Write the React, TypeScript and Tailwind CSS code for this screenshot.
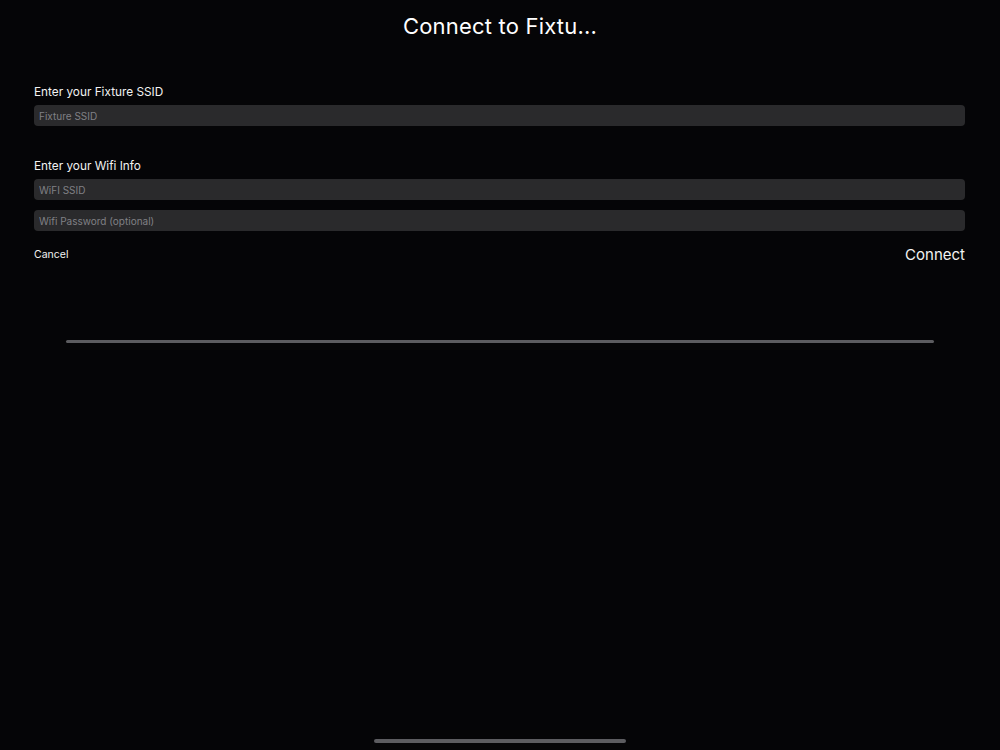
export default function App() {
  const font = { fontFamily: '"Inter", "Liberation Sans", sans-serif' };
  return (
    <div className="w-[1000px] h-[750px] bg-[#050507] text-white flex flex-col relative overflow-hidden" style={font}>
      <div className="h-[52px] flex items-center justify-center">
        <h1 className="text-[22px] font-normal tracking-[0.2px]">Connect to Fixtu...</h1>
      </div>
      <div className="px-[34px] pt-[31px] flex flex-col">
        <label className="text-[11.8px] text-[#f2f2f2] leading-[18px]">Enter your Fixture SSID</label>
        <input
          placeholder="Fixture SSID"
          className="mt-[4px] h-[21px] w-[931px] rounded-[4px] bg-[#2a2a2c] px-[5px] text-[10px] text-white placeholder-[#808085] outline-none"
        />
        <label className="mt-[31px] text-[11.8px] text-[#f2f2f2] leading-[18px]">Enter your Wifi Info</label>
        <input
          placeholder="WiFI SSID"
          className="mt-[4px] h-[21px] w-[931px] rounded-[4px] bg-[#2a2a2c] px-[5px] text-[10px] text-white placeholder-[#808085] outline-none"
        />
        <input
          placeholder="Wifi Password (optional)"
          className="mt-[10px] h-[21px] w-[931px] rounded-[4px] bg-[#2a2a2c] px-[5px] text-[10px] text-white placeholder-[#808085] outline-none"
        />
        <div className="mt-[13px] w-[931px] flex items-center justify-between">
          <button className="text-[10.5px] text-[#f2f2f2]">Cancel</button>
          <button className="text-[15px] text-[#f2f2f2]">Connect</button>
        </div>
      </div>
      <div className="mt-[73px] mx-[66px] h-[3px] bg-[#5c5c60] rounded-full" />
      <div className="absolute bottom-[7px] left-[374px] w-[252px] h-[4px] rounded-full bg-[#5c5c60]" />
    </div>
  );
}
